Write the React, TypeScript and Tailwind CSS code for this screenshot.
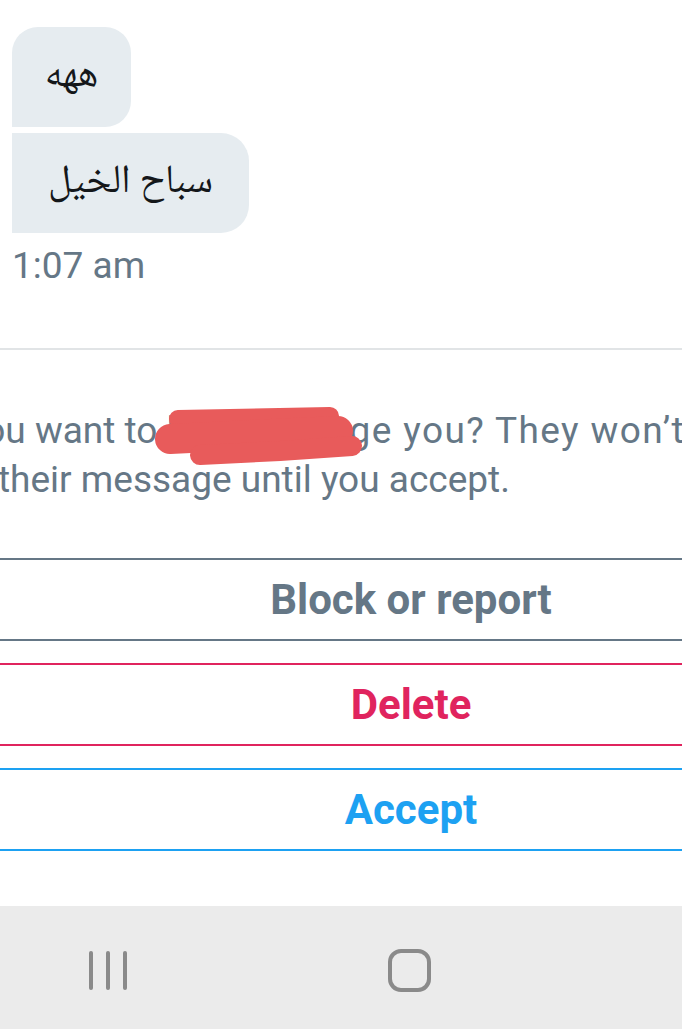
import React from 'react';

// Message request screen (cropped phone screenshot)
const bodyFont = { fontFamily: 'Roboto, "Liberation Sans", sans-serif' };
const arabicFont = { fontFamily: '"Noto Naskh Arabic", "Noto Sans Arabic", "DejaVu Sans", sans-serif' };

function Bubble({ text, className }: { text: string; className: string }) {
    return (
        <div className={`flex h-[100px] items-center justify-center bg-[#e6ecf0] ${className}`}>
            <span dir="rtl" className="text-[40px] leading-none text-[#14171a]" style={arabicFont}>
                {text}
            </span>
        </div>
    );
}

function ActionButton({ label, color }: { label: string; color: string }) {
    return (
        <button
            type="button"
            className={`flex h-[83px] w-full items-center justify-center border-y-2 bg-white pl-[140px] text-[42px] font-bold ${color}`}
        >
            {label}
        </button>
    );
}

export default function App() {
    return (
        <div className="flex h-[1029px] w-[682px] flex-col overflow-hidden bg-white" style={bodyFont}>
            {/* Conversation */}
            <div className="px-[12px] pt-[27px]">
                <Bubble text="ههه" className="w-[119px] rounded-t-[26px] rounded-br-[26px]" />
                <Bubble text="سباح الخيل" className="mt-[6px] w-[237px] rounded-r-[28px]" />
                <div className="mt-[14px] text-[37px] leading-[37px] text-[#657786]">1:07 am</div>
            </div>

            <div className="mt-[64px] h-[2px] w-full bg-[#e1e4e6]" />

            {/* Request notice, name scribbled out */}
            <div className="relative mt-[56px] overflow-hidden text-[37px] leading-[49px] text-[#657786]">
                <div className="ml-[-33px] whitespace-nowrap">
                    you want to l<span className="inline-block w-[174px]" />
                    <span className="tracking-[1.4px]">ge you? They won’t</span>
                </div>
                <div className="ml-[-2px] whitespace-nowrap">their message until you accept.</div>
                <svg className="absolute left-0 top-0" width="682" height="98" viewBox="0 0 682 98" fill="none">
                    <g stroke="#e85b5b" strokeLinecap="round" strokeLinejoin="round">
                        <path d="M178 13 L330 10" strokeWidth="18" />
                        <path d="M170 33 L250 29 L338 25" strokeWidth="30" />
                        <path d="M200 49 L280 45 L352 40" strokeWidth="20" />
                    </g>
                </svg>
            </div>

            {/* Actions */}
            <div className="mt-[54px] flex flex-col gap-[22px]">
                <ActionButton label="Block or report" color="border-[#657786] text-[#657786]" />
                <ActionButton label="Delete" color="border-[#e0245e] text-[#e0245e]" />
                <ActionButton label="Accept" color="border-[#1da1f2] text-[#1da1f2]" />
            </div>

            {/* System navigation bar */}
            <div className="mt-auto flex h-[123px] items-start bg-[#ebebeb] pl-[89px] pt-[43px]">
                <div className="mt-[2px] flex gap-[13px]">
                    <div className="h-[39px] w-[4px] rounded-full bg-[#8a8a8a]" />
                    <div className="h-[39px] w-[4px] rounded-full bg-[#8a8a8a]" />
                    <div className="h-[39px] w-[4px] rounded-full bg-[#8a8a8a]" />
                </div>
                <div className="ml-[261px] h-[43px] w-[43px] rounded-[13px] border-[4px] border-[#8a8a8a]" />
            </div>
        </div>
    );
}
